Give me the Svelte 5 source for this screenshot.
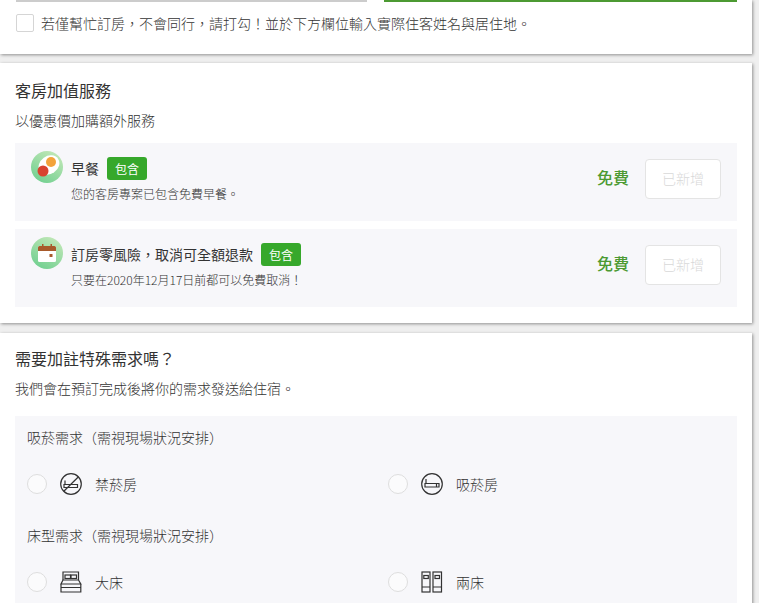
<script>
  const addons = [
    { icon: "egg", name: "早餐", desc: "您的客房專案已包含免費早餐。" },
    { icon: "cal", name: "訂房零風險，取消可全額退款", desc: "只要在2020年12月17日前都可以免費取消！" }
  ];

  const groups = [
    {
      label: "吸菸需求（需視現場狀況安排）",
      options: [
        { icon: "nosmoke", text: "禁菸房" },
        { icon: "smoke", text: "吸菸房" }
      ]
    },
    {
      label: "床型需求（需視現場狀況安排）",
      options: [
        { icon: "big", text: "大床" },
        { icon: "twin", text: "兩床" }
      ]
    }
  ];
</script>

<style>
  :global(html), :global(body) {
    margin: 0;
    overflow: hidden;
  }

  .page {
    height: 603px;
    overflow: hidden;
    background: #efefef;
    font-family: "Noto Sans CJK TC", "Noto Sans", sans-serif;
    font-size: 14px;
    font-weight: 300;
    color: #333;
    padding-right: 7px;
  }

  .card {
    background: #fff;
    box-shadow: 1px 1px 3px rgba(0, 0, 0, 0.4);
    margin-bottom: 9px;
    padding: 0 15px;
  }

  .top {
    height: 54px;
  }

  .clipped {
    display: flex;
    height: 2px;
    gap: 17px;
    padding-left: 1px;
  }

  .clipped .input {
    width: 351px;
    border-bottom: 2px solid #ccc;
    box-sizing: border-box;
  }

  .clipped .bar {
    flex: 1;
    background: #4c9a32;
  }

  .check-row {
    display: flex;
    align-items: center;
    gap: 7px;
    margin-top: 12px;
    padding-left: 1px;
    line-height: 18px;
  }

  .box {
    width: 16px;
    height: 16px;
    border: 1px solid #d5d5d5;
    border-radius: 2px;
  }

  h2 {
    margin: 0;
    font-size: 16px;
    font-weight: 400;
    line-height: 22px;
  }

  .sub {
    margin: 0;
    line-height: 20px;
  }

  .addons {
    height: 260px;
    padding-top: 16px;
    margin-bottom: 10px;
    box-sizing: border-box;
  }

  .addons .sub {
    margin: 9px 0 13px;
  }

  .addon {
    display: flex;
    align-items: flex-start;
    height: 78px;
    background: #f7f7fa;
    margin-bottom: 8px;
    padding: 16px 16px 0;
    box-sizing: border-box;
  }

  .circle {
    width: 32px;
    height: 32px;
    margin-top: -8px;
    flex: none;
  }

  .info {
    flex: 1;
    margin-left: 8px;
    margin-top: -3px;
  }

  .name {
    display: flex;
    align-items: center;
    gap: 8px;
    height: 24px;
    font-weight: 400;
    line-height: 24px;
  }

  .badge {
    width: 40px;
    height: 23px;
    border-radius: 3px;
    background: #36a82b;
    color: #fff;
    font-size: 12px;
    line-height: 23px;
    text-align: center;
  }

  .desc {
    margin-top: 5px;
    font-size: 12px;
    line-height: 17px;
  }

  .price {
    color: #4c9a32;
    font-size: 16px;
    font-weight: 500;
    line-height: 40px;
    margin-top: -2px;
    margin-right: 16px;
  }

  .added {
    width: 76px;
    height: 40px;
    border: 1px solid #e4e4e4;
    border-radius: 4px;
    background: #fff;
    color: #d8d8d8;
    font-family: inherit;
    font-weight: 300;
    font-size: 14px;
    box-sizing: border-box;
    padding: 0 0 2px;
  }

  .special {
    padding-top: 14px;
  }

  .special .sub {
    margin: 9px 0 18px;
  }

  .panel {
    background: #f7f7fa;
    padding: 11px 12px;
  }

  .label {
    line-height: 20px;
    margin-bottom: 25px;
  }

  .opts {
    display: grid;
    grid-template-columns: 361px 1fr;
    height: 24px;
    margin-bottom: 29px;
  }

  .opt {
    display: flex;
    align-items: center;
  }

  .radio {
    width: 20px;
    height: 20px;
    border: 1.5px solid #dedede;
    border-radius: 50%;
    background: #fbfbfc;
    box-sizing: border-box;
    margin-right: 13px;
  }

  .opt svg {
    width: 24px;
    height: 24px;
    margin-right: 11px;
    fill: none;
    stroke: #333;
    stroke-width: 1.2;
  }
</style>

<div class="page">
  <div class="card top">
    <div class="clipped"><div class="input"></div><div class="bar"></div></div>
    <div class="check-row">
      <span class="box"></span>
      <span>若僅幫忙訂房，不會同行，請打勾！並於下方欄位輸入實際住客姓名與居住地。</span>
    </div>
  </div>

  <div class="card addons">
    <h2>客房加值服務</h2>
    <p class="sub">以優惠價加購額外服務</p>
    {#each addons as a}
      <div class="addon">
        <svg class="circle" viewBox="0 0 32 32">
          <defs>
            <linearGradient id="g-{a.icon}" x1="0.2" y1="1" x2="0.8" y2="0">
              <stop offset="0" stop-color="#6fcf8f" />
              <stop offset="1" stop-color="#c3e8b8" />
            </linearGradient>
          </defs>
          <circle cx="16" cy="16" r="16" fill="url(#g-{a.icon})" />
          {#if a.icon === "egg"}
            <ellipse cx="18" cy="14" rx="11" ry="9" fill="#fff" transform="rotate(-35 18 14)" />
            <circle cx="20" cy="11" r="5" fill="#f3a33b" />
            <circle cx="12" cy="20" r="5.500" fill="#d8432f" />
          {:else}
            <rect x="7" y="9" width="18" height="16" rx="1.500" fill="#fff" />
            <path d="M7 14V10.500A1.500 1.500 0 0 1 8.500 9h15A1.500 1.500 0 0 1 25 10.500V14z" fill="#a85a2a" />
            <rect x="11" y="7" width="1.500" height="3.500" fill="#a85a2a" />
            <rect x="19.500" y="7" width="1.500" height="3.500" fill="#a85a2a" />
            <rect x="18.500" y="17" width="3" height="3" fill="#a85a2a" />
          {/if}
        </svg>
        <div class="info">
          <div class="name"><span>{a.name}</span><span class="badge">包含</span></div>
          <div class="desc">{a.desc}</div>
        </div>
        <span class="price">免費</span>
        <button class="added">已新增</button>
      </div>
    {/each}
  </div>

  <div class="card special">
    <h2>需要加註特殊需求嗎？</h2>
    <p class="sub">我們會在預訂完成後將你的需求發送給住宿。</p>
    <div class="panel">
      {#each groups as g}
        <div class="label">{g.label}</div>
        <div class="opts">
          {#each g.options as o}
            <div class="opt">
              <span class="radio"></span>
              <svg viewBox="0 0 24 24">
                {#if o.icon === "nosmoke"}
                  <circle cx="11" cy="12" r="10.300" />
                  <path d="M18.500 4.800L3.800 19.200" />
                  <path d="M4 12.500h13.500v3H4zM5 12.500V8.500" />
                {:else if o.icon === "smoke"}
                  <circle cx="11" cy="12" r="10.300" />
                  <path d="M4 11.500h14v3.500H4zM15.500 11.500v3.500M5 11.500V7" />
                {:else if o.icon === "big"}
                  <path d="M3 10V2h15.500v8" />
                  <rect x="5" y="5" width="5.500" height="3.500" />
                  <rect x="11" y="5" width="5.500" height="3.500" />
                  <path d="M3 10L1 14h19.800l-2.300-4zM1 14v8h19.800v-8M1 17.500h19.800" />
                {:else}
                  <rect x="1" y="2" width="8" height="20" />
                  <rect x="12" y="2" width="8.500" height="20" />
                  <rect x="2.800" y="5.500" width="4.500" height="3" />
                  <rect x="14" y="5.500" width="4.500" height="3" />
                  <path d="M1 17h8M12 17h8.500" />
                {/if}
              </svg>
              <span>{o.text}</span>
            </div>
          {/each}
        </div>
      {/each}
    </div>
  </div>
</div>
